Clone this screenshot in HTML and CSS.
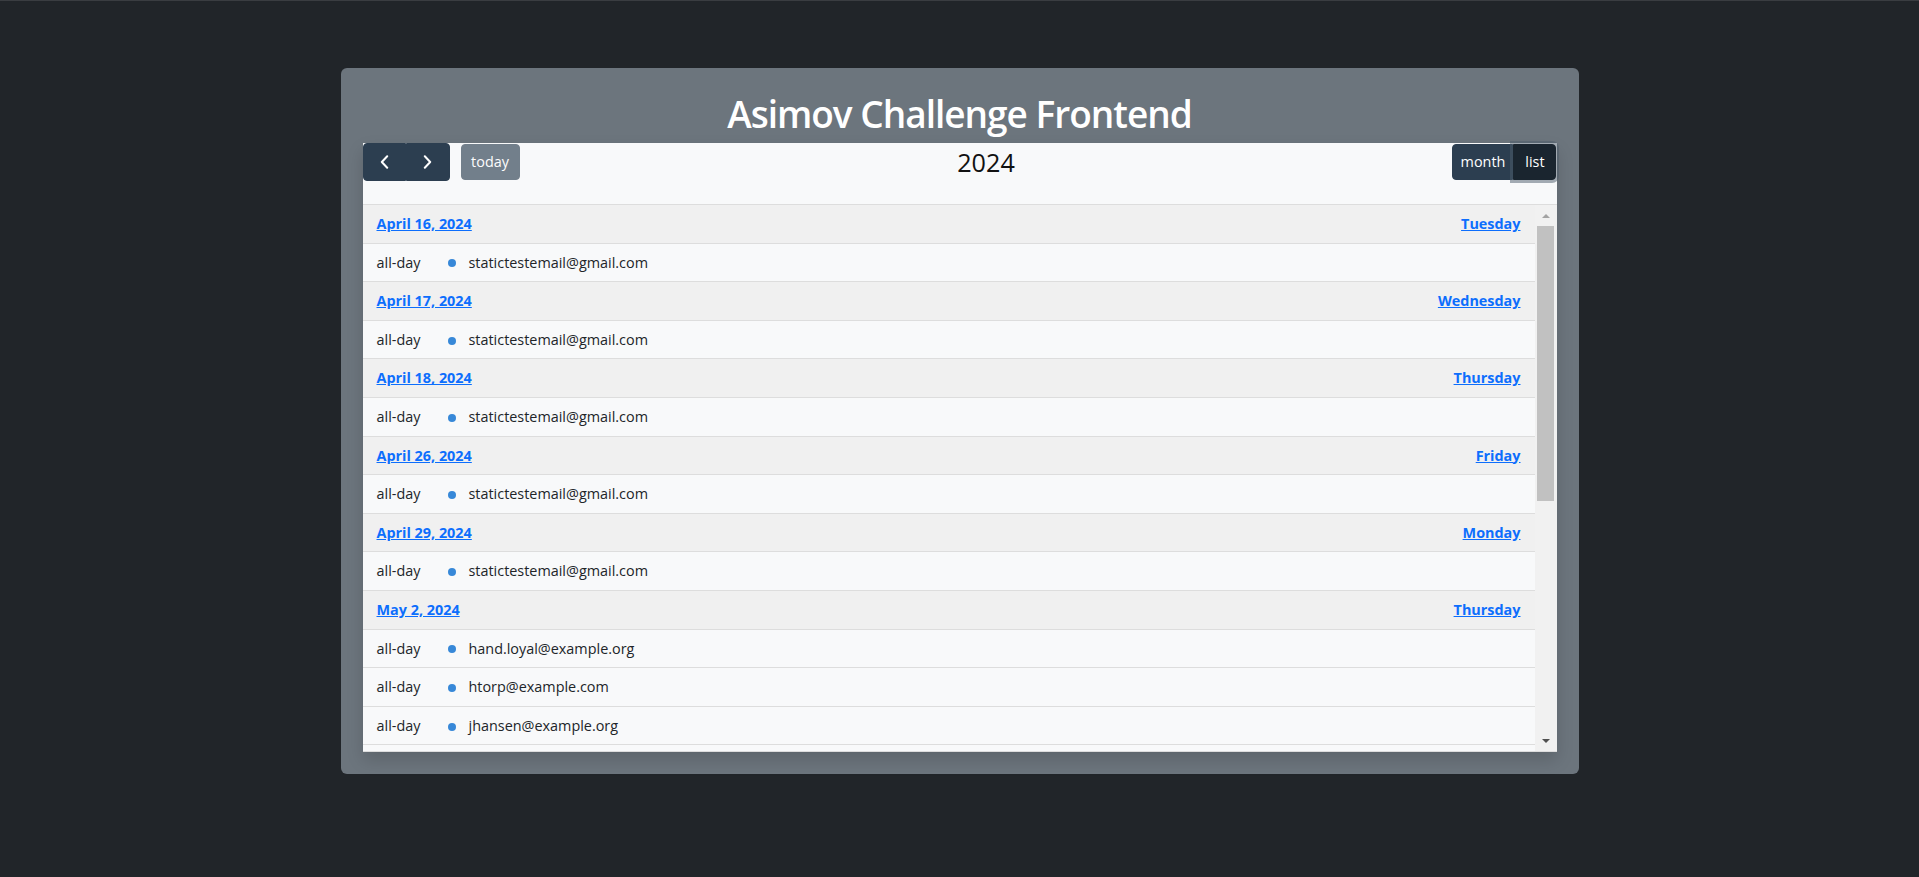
FILE: index.html
```html
<!DOCTYPE html>
<html lang="en">
<head>
<meta charset="utf-8">
<title>Asimov Challenge Frontend</title>
<link rel="stylesheet" href="styles.css">
</head>
<body>
<main class="page">
  <section class="card">
    <h1 class="card-title">Asimov Challenge Frontend</h1>
    <div class="calendar">
      <div class="toolbar">
        <div class="chunk">
          <div class="btn-group">
            <button class="btn btn-icon" type="button" aria-label="prev">
              <svg width="9" height="14" viewBox="0 0 9 14"><path d="M7.2 1.2 L1.8 7 L7.2 12.8" fill="none" stroke="#fff" stroke-width="2" stroke-linecap="round" stroke-linejoin="round"/></svg>
            </button>
            <button class="btn btn-icon" type="button" aria-label="next">
              <svg width="9" height="14" viewBox="0 0 9 14"><path d="M1.8 1.2 L7.2 7 L1.8 12.8" fill="none" stroke="#fff" stroke-width="2" stroke-linecap="round" stroke-linejoin="round"/></svg>
            </button>
          </div>
          <button class="btn btn-today" type="button" disabled>today</button>
        </div>
        <h2 class="toolbar-title">2024</h2>
        <div class="chunk">
          <div class="btn-group">
            <button class="btn btn-month" type="button">month</button>
            <button class="btn btn-list active" type="button">list</button>
          </div>
        </div>
      </div>
      <div class="list">
        <div class="list-body">
          <div class="day-row"><a href="#">April 16, 2024</a><a href="#">Tuesday</a></div>
          <div class="event-row"><span class="time">all-day</span><span class="dot"></span><span class="title">statictestemail@gmail.com</span></div>
          <div class="day-row"><a href="#">April 17, 2024</a><a href="#">Wednesday</a></div>
          <div class="event-row"><span class="time">all-day</span><span class="dot"></span><span class="title">statictestemail@gmail.com</span></div>
          <div class="day-row"><a href="#">April 18, 2024</a><a href="#">Thursday</a></div>
          <div class="event-row"><span class="time">all-day</span><span class="dot"></span><span class="title">statictestemail@gmail.com</span></div>
          <div class="day-row"><a href="#">April 26, 2024</a><a href="#">Friday</a></div>
          <div class="event-row"><span class="time">all-day</span><span class="dot"></span><span class="title">statictestemail@gmail.com</span></div>
          <div class="day-row"><a href="#">April 29, 2024</a><a href="#">Monday</a></div>
          <div class="event-row"><span class="time">all-day</span><span class="dot"></span><span class="title">statictestemail@gmail.com</span></div>
          <div class="day-row"><a href="#">May 2, 2024</a><a href="#">Thursday</a></div>
          <div class="event-row"><span class="time">all-day</span><span class="dot"></span><span class="title">hand.loyal@example.org</span></div>
          <div class="event-row"><span class="time">all-day</span><span class="dot"></span><span class="title">htorp@example.com</span></div>
          <div class="event-row"><span class="time">all-day</span><span class="dot"></span><span class="title">jhansen@example.org</span></div>
        </div>
        <div class="scrollbar" aria-hidden="true">
          <div class="sb-button"><span class="arrow-up"></span></div>
          <div class="sb-thumb"></div>
          <div class="sb-space"></div>
          <div class="sb-button"><span class="arrow-down"></span></div>
        </div>
      </div>
    </div>
  </section>
</main>
</body>
</html>
```

FILE: styles.css
```css
html, body {
  height: 100%;
}

body {
  margin: 0;
  background: #212529;
  border-top: 1px solid #3a3d41;
  box-sizing: border-box;
  font-family: "Open Sans", "Noto Sans", sans-serif;
  color: #212529;
}

.page {
  padding-top: 67px;
}

.card {
  width: 1238px;
  margin: 0 auto;
  box-sizing: border-box;
  background: #6c757d;
  border-radius: 6px;
  padding: 22px 22px 22px;
}

.card-title {
  margin: 0 0 5px;
  text-align: center;
  color: #fff;
  font-size: 37px;
  font-weight: 600;
  letter-spacing: -1px;
  line-height: 48px;
}

.calendar {
  background: #f8f9fa;
  box-shadow: 0 8px 16px rgba(0, 0, 0, 0.15);
  font-size: 14.4px;
}

.toolbar {
  display: flex;
  justify-content: space-between;
  align-items: center;
  height: 38px;
  margin-bottom: 23px;
}

.chunk {
  display: flex;
  align-items: center;
}

.toolbar-title {
  margin: 0;
  font-size: 25.2px;
  font-weight: 400;
  line-height: 30px;
  color: #111;
}

.btn-group {
  display: flex;
}

.btn {
  display: flex;
  align-items: center;
  justify-content: center;
  box-sizing: border-box;
  height: 36px;
  margin: 0;
  padding: 0;
  border: 1px solid #2c3e50;
  background: #2c3e50;
  color: #fff;
  font-family: inherit;
  font-size: 14.4px;
  line-height: 21.6px;
  border-radius: 4px;
}

.btn-group .btn {
  border-radius: 0;
}

.btn-group .btn:first-child {
  border-top-left-radius: 4px;
  border-bottom-left-radius: 4px;
}

.btn-group .btn:last-child {
  border-top-right-radius: 4px;
  border-bottom-right-radius: 4px;
}

.btn-icon {
  width: 43.5px;
  height: 38px;
}

.btn-today {
  width: 59px;
  margin-left: 11px;
  opacity: 0.65;
}

.btn-month {
  width: 61px;
}

.btn-list {
  width: 43px;
}

.btn.active {
  background: #1a252f;
  border-color: #1a252f;
  box-shadow: 0 0 0 3px rgba(76, 91, 106, 0.5);
}

.list {
  display: flex;
  height: 548px;
  box-sizing: border-box;
  border-top: 1px solid #dddddd;
  border-bottom: 1px solid #dddddd;
}

.list-body {
  flex: 1;
  overflow: hidden;
  background: #f8f9fa;
}

.day-row {
  display: flex;
  justify-content: space-between;
  padding: 8px 14px;
  line-height: 21.6px;
  background: #f0f0f0;
  border-bottom: 1px solid #dddddd;
  font-weight: 700;
}

.day-row a {
  color: #0d6efd;
  text-decoration: underline;
}

.event-row {
  display: flex;
  align-items: center;
  padding: 8px 14px;
  line-height: 21.6px;
  background: #f8f9fa;
  border-bottom: 1px solid #dddddd;
}

.time {
  width: 71px;
  white-space: nowrap;
}

.dot {
  width: 8px;
  height: 8px;
  border-radius: 50%;
  background: #3788d8;
  margin-top: 2px;
}

.title {
  margin-left: 13px;
  white-space: nowrap;
}

.scrollbar {
  display: flex;
  flex-direction: column;
  width: 22px;
  background: #f1f1f1;
}

.sb-button {
  display: flex;
  align-items: center;
  justify-content: center;
  height: 21px;
  padding-left: 1px;
}

.arrow-up {
  width: 0;
  height: 0;
  border-left: 4px solid transparent;
  border-right: 4px solid transparent;
  border-bottom: 4px solid #a3a3a3;
}

.arrow-down {
  width: 0;
  height: 0;
  border-left: 4px solid transparent;
  border-right: 4px solid transparent;
  border-top: 4px solid #505050;
}

.sb-thumb {
  height: 275px;
  margin: 0 3px 0 2px;
  background: #c1c1c1;
}

.sb-space {
  flex: 1;
}
```
